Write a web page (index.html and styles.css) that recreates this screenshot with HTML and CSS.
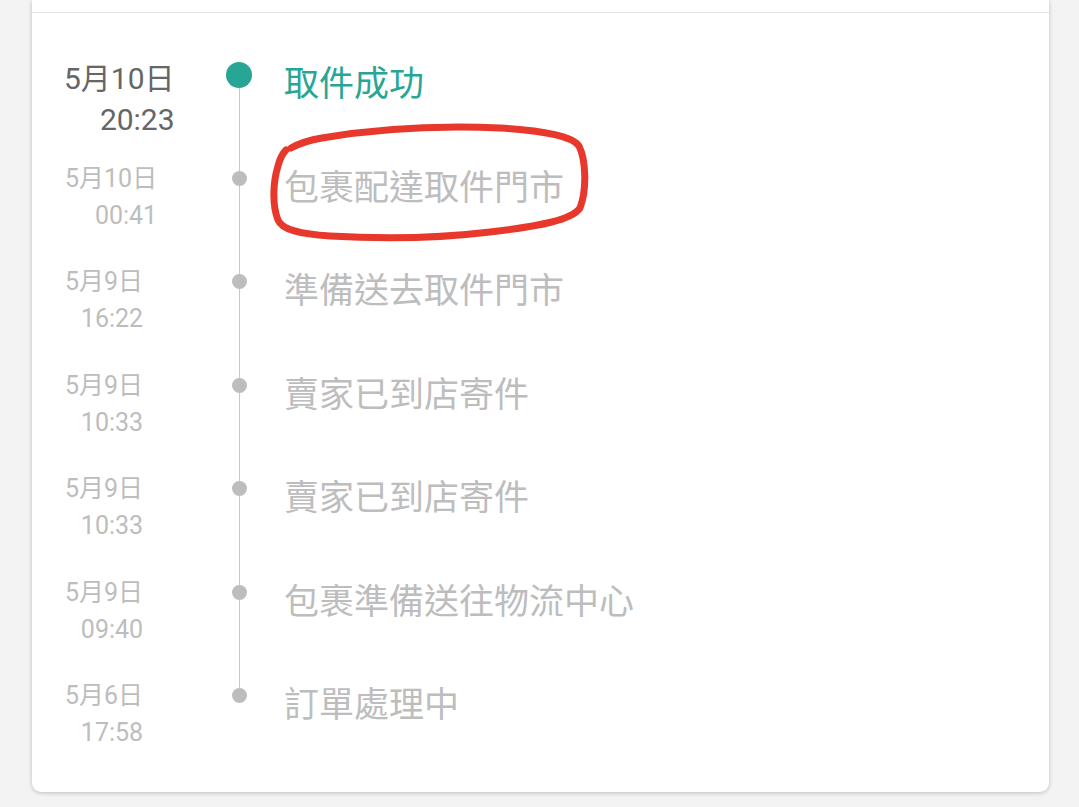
FILE: index.html
```html
<!DOCTYPE html>
<html lang="zh-Hant">
<head>
<meta charset="utf-8">
<title>物流狀態</title>
<link rel="stylesheet" href="styles.css">
</head>
<body>
<div class="card">
  <div class="card-head"></div>
  <div class="timeline">
    <div class="item active">
      <div class="date"><span>5月10日</span><span>20:23</span></div>
      <div class="rail"><i class="seg top"></i><b class="dot"></b><i class="seg bottom"></i></div>
      <div class="label">取件成功</div>
    </div>
    <div class="item">
      <div class="date"><span>5月10日</span><span>00:41</span></div>
      <div class="rail"><i class="seg top"></i><b class="dot"></b><i class="seg bottom"></i></div>
      <div class="label">包裹配達取件門市</div>
    </div>
    <div class="item">
      <div class="date"><span>5月9日</span><span>16:22</span></div>
      <div class="rail"><i class="seg top"></i><b class="dot"></b><i class="seg bottom"></i></div>
      <div class="label">準備送去取件門市</div>
    </div>
    <div class="item">
      <div class="date"><span>5月9日</span><span>10:33</span></div>
      <div class="rail"><i class="seg top"></i><b class="dot"></b><i class="seg bottom"></i></div>
      <div class="label">賣家已到店寄件</div>
    </div>
    <div class="item">
      <div class="date"><span>5月9日</span><span>10:33</span></div>
      <div class="rail"><i class="seg top"></i><b class="dot"></b><i class="seg bottom"></i></div>
      <div class="label">賣家已到店寄件</div>
    </div>
    <div class="item">
      <div class="date"><span>5月9日</span><span>09:40</span></div>
      <div class="rail"><i class="seg top"></i><b class="dot"></b><i class="seg bottom"></i></div>
      <div class="label">包裹準備送往物流中心</div>
    </div>
    <div class="item last">
      <div class="date"><span>5月6日</span><span>17:58</span></div>
      <div class="rail"><i class="seg top"></i><b class="dot"></b><i class="seg bottom"></i></div>
      <div class="label">訂單處理中</div>
    </div>
  </div>
  <svg class="scribble" viewBox="32 0 1017 792" width="1017" height="792" aria-hidden="true">
    <path d="M291 148 C 300 143, 310 140, 322 138 C 370 130, 430 125, 500 128 C 545 131, 572 136, 579 146 C 586 160, 587 190, 580 208 C 572 220, 540 226, 490 232 C 440 238, 380 239, 330 236 C 300 234, 282 230, 278 220 C 272 205, 273 182, 278 166 C 280 158, 283 153, 286 150"
      fill="none" stroke="#e8382b" stroke-width="7" stroke-linecap="round" stroke-linejoin="round"/>
  </svg>
</div>
</body>
</html>
```

FILE: styles.css
```css
html, body {
  margin: 0;
  padding: 0;
}
body {
  background: #f3f3f3;
  width: 1079px;
  height: 807px;
  overflow: hidden;
  font-family: Roboto, "Noto Sans CJK TC", "Noto Sans", sans-serif;
}
.card {
  position: relative;
  margin-left: 32px;
  width: 1017px;
  height: 792px;
  background: #fff;
  border-radius: 0 0 9px 9px;
  box-shadow: 0 1px 4px rgba(0, 0, 0, 0.22);
  box-sizing: border-box;
}
.card-head {
  height: 12px;
  border-bottom: 1px solid #e2e2e2;
}
.timeline {
  padding: 45px 0 0 33px;
}
.item {
  display: grid;
  grid-template-columns: 148px 52px 1fr;
  height: 103.5px;
}
.date {
  justify-self: start;
  display: inline-flex;
  flex-direction: column;
  align-items: flex-end;
  font-size: 25px;
  line-height: 37px;
  color: #bdbdbd;
  margin-top: -2px;
}
.item.active .date {
  font-size: 30px;
  line-height: 41px;
  color: #666;
  margin-top: 0;
  margin-left: -1px;
}
.rail {
  display: flex;
  flex-direction: column;
  align-items: center;
}
.seg {
  width: 1px;
  background: #c9c9c9;
}
.seg.top {
  height: 9px;
}
.seg.bottom {
  flex: 1;
}
.dot {
  width: 15px;
  height: 15px;
  border-radius: 50%;
  background: #bdbdbd;
  flex: none;
}
.item.active .seg.top {
  height: 4px;
  background: transparent;
}
.item.active .dot {
  width: 26px;
  height: 26px;
  background: #27a695;
}
.item.last .seg.bottom {
  background: transparent;
}
.label {
  padding: 3px 0 0 19px;
  font-family: "Noto Sans CJK TC", "Noto Sans", sans-serif;
  font-size: 35px;
  line-height: 40px;
  color: #bdbdbd;
}
.item.active .label {
  color: #27a695;
  padding-top: 3px;
}
.scribble {
  position: absolute;
  left: 0;
  top: 0;
  pointer-events: none;
}
```
